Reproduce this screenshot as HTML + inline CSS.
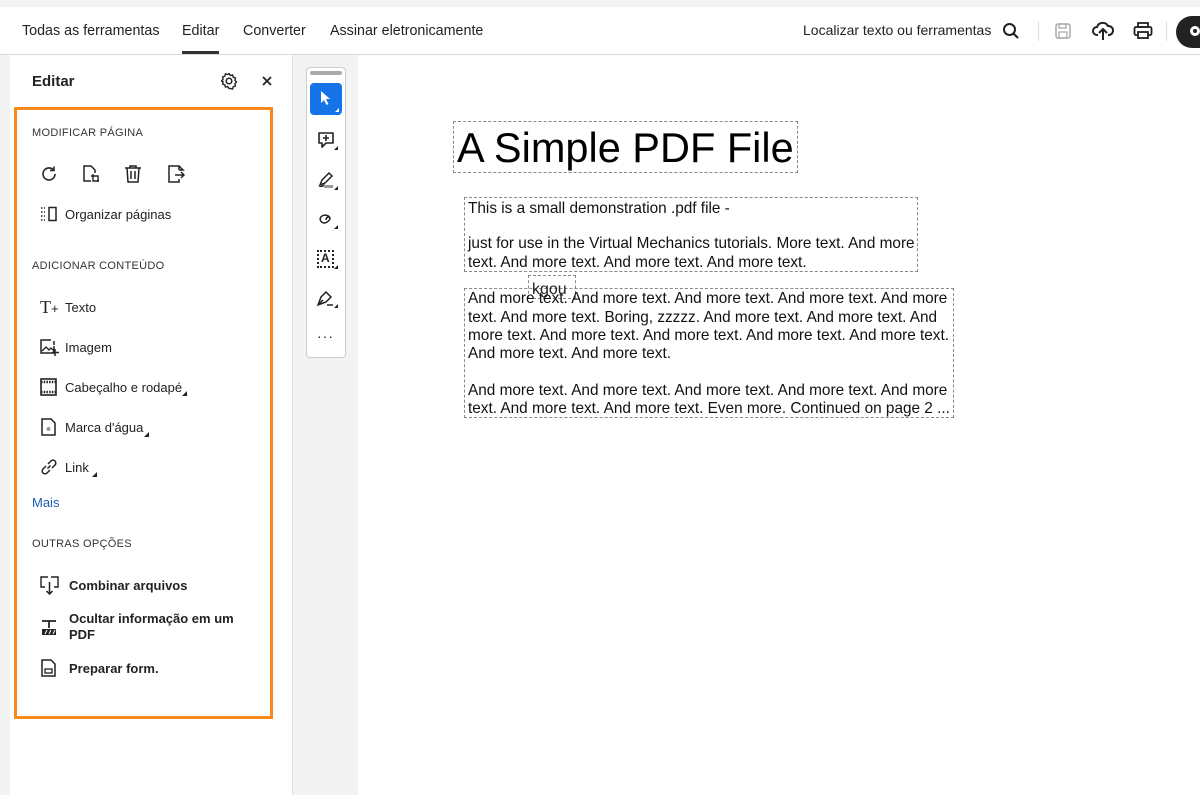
<!DOCTYPE html>
<html><head><meta charset="utf-8"><style>
*{margin:0;padding:0;box-sizing:border-box}
body{width:1200px;height:795px;overflow:hidden;background:#f3f3f3;font-family:"Liberation Sans",Arial,sans-serif;position:relative;color:#222}
.a{position:absolute;white-space:nowrap}
.hdr{position:absolute;left:0;top:7px;width:1200px;height:48px;background:#fff;border-bottom:1px solid #d8d8d8}
.nav{font-size:14.3px;color:#222;top:23px}
.panel{position:absolute;left:10px;top:55px;width:283px;height:740px;background:#fff;border-right:1px solid #e0e0e0}
.box{position:absolute;left:14px;top:107px;width:259px;height:612px;border:3px solid #f68a1e}
.sec{font-size:11px;color:#333;letter-spacing:.3px}
.it{font-size:13px;color:#222}
.b{font-weight:bold}
.tri{position:absolute;width:0;height:0;border-left:5px solid transparent;border-bottom:5px solid #222}
.page{position:absolute;left:358px;top:55px;width:842px;height:740px;background:#fff}
.pt{font-size:15.35px;color:#111}
.dot{position:absolute;border:1px dashed #888}
svg{position:absolute}
</style></head><body>
<div class="hdr"></div>
<div class="a nav" style="left:22px">Todas as ferramentas</div>
<div class="a nav" style="left:182px">Editar</div>
<div style="position:absolute;left:182px;top:51px;width:37px;height:3px;background:#333"></div>
<div class="a nav" style="left:243px">Converter</div>
<div class="a nav" style="left:330px">Assinar eletronicamente</div>
<div class="a nav" style="left:803px;font-size:14px;top:22px">Localizar texto ou ferramentas</div>
<svg style="left:1002px;top:22px" width="18" height="18" viewBox="0 0 18 18"><circle cx="7.5" cy="7.5" r="5.5" fill="none" stroke="#222" stroke-width="2"/><path d="M11.5 11.5L16 16" stroke="#222" stroke-width="2.2"/></svg>
<div style="position:absolute;left:1038px;top:21px;width:1px;height:20px;background:#ddd"></div>
<svg style="left:1054px;top:22px" width="18" height="18" viewBox="0 0 18 18"><rect x="2" y="2" width="14" height="14" rx="2" fill="none" stroke="#aaa" stroke-width="1.5"/><rect x="5" y="2" width="7" height="4" fill="none" stroke="#aaa" stroke-width="1.3"/><rect x="5" y="10" width="8" height="6" fill="none" stroke="#aaa" stroke-width="1.3"/></svg>
<svg style="left:1092px;top:21px" width="22" height="20" viewBox="0 0 22 20"><path d="M6 14H5a4 4 0 0 1 0-8 6 6 0 0 1 11-1 4.5 4.5 0 0 1 1 9h-1" fill="none" stroke="#222" stroke-width="2"/><path d="M11 19V9M7 12l4-4 4 4" fill="none" stroke="#222" stroke-width="2"/></svg>
<svg style="left:1133px;top:22px" width="20" height="18" viewBox="0 0 20 18"><rect x="5" y="1" width="10" height="4" fill="none" stroke="#222" stroke-width="1.8"/><rect x="1.5" y="5" width="17" height="8" rx="1.5" fill="none" stroke="#222" stroke-width="1.8"/><rect x="5" y="10" width="10" height="6" fill="#fff" stroke="#222" stroke-width="1.8"/></svg>
<div style="position:absolute;left:1166px;top:21px;width:1px;height:20px;background:#ddd"></div>
<div style="position:absolute;left:1176px;top:16px;width:40px;height:32px;border-radius:16px;background:#222"></div>
<div style="position:absolute;left:1190px;top:26px;width:10px;height:10px;border-radius:50%;border:3px solid #fff"></div>

<div class="panel"></div>
<div class="a" style="left:32px;top:73px;font-size:15px;font-weight:bold">Editar</div>
<svg style="left:220px;top:72px" width="18" height="18" viewBox="0 0 18 18"><circle cx="9" cy="9" r="2.8" fill="none" stroke="#222" stroke-width="1.5"/><path d="M9 1.5l1.3 2 2.3-.6.6 2.3 2.3.8-.6 2.3 1.6 1.7-1.6 1.7.6 2.3-2.3.8-.6 2.3-2.3-.6L9 16.5l-1.3-2-2.3.6-.6-2.3-2.3-.8.6-2.3L1.5 9l1.6-1.7-.6-2.3 2.3-.8.6-2.3 2.3.6z" fill="none" stroke="#222" stroke-width="1.4" stroke-linejoin="round"/></svg>
<svg style="left:262px;top:76px" width="10" height="10" viewBox="0 0 10 10"><path d="M1 1l8 8M9 1L1 9" stroke="#222" stroke-width="1.8"/></svg>
<div class="box"></div>
<div class="a sec" style="left:32px;top:127px">MODIFICAR PÁGINA</div>
<svg style="left:40px;top:165px" width="18" height="18" viewBox="0 0 18 18"><path d="M15 9a6 6 0 1 1-2-4.5" fill="none" stroke="#222" stroke-width="1.6"/><path d="M14 1.5v4h-4" fill="none" stroke="#222" stroke-width="1.6"/></svg>
<svg style="left:82px;top:165px" width="18" height="18" viewBox="0 0 18 18"><path d="M9 16H2V1h7l4 4v3" fill="none" stroke="#222" stroke-width="1.5"/><path d="M11 9v7h6M9 11h7v6" fill="none" stroke="#222" stroke-width="1.4"/></svg>
<svg style="left:124px;top:165px" width="18" height="18" viewBox="0 0 18 18"><path d="M1 3h16M6 3V1h6v2M3 3l1 14h10l1-14M7 6v8M11 6v8" fill="none" stroke="#222" stroke-width="1.5"/></svg>
<svg style="left:167px;top:165px" width="18" height="18" viewBox="0 0 18 18"><path d="M12 5V1H2v16h10v-3M12 1l4 4h-4" fill="none" stroke="#222" stroke-width="1.5"/><path d="M8 10h9M14 7l3 3-3 3" fill="none" stroke="#222" stroke-width="1.4"/></svg>
<svg style="left:40px;top:206px" width="18" height="16" viewBox="0 0 18 16"><path d="M1 2h4M1 6h4M1 10h4M1 14h4" stroke="#222" stroke-width="1.4" stroke-dasharray="1.5 1.5"/><rect x="9" y="1.5" width="7" height="13" fill="none" stroke="#222" stroke-width="1.5"/></svg>
<div class="a it" style="left:65px;top:207px">Organizar páginas</div>

<div class="a sec" style="left:32px;top:260px">ADICIONAR CONTEÚDO</div>
<div class="a" style="left:40px;top:297px;font-family:'Liberation Serif',serif;font-size:18px">T<span style="font-size:13px;font-family:'Liberation Sans'">+</span></div>
<div class="a it" style="left:65px;top:300px">Texto</div>
<svg style="left:40px;top:339px" width="19" height="17" viewBox="0 0 19 17"><path d="M14 7v7H1V1h10" fill="none" stroke="#222" stroke-width="1.5"/><path d="M2 12l4-4 3 3 2-2 3 3" fill="none" stroke="#222" stroke-width="1.3"/><path d="M15 10v7M12 13.5h7M14 2v4" stroke="#222" stroke-width="1.5"/></svg>
<div class="a it" style="left:65px;top:340px">Imagem</div>
<svg style="left:40px;top:378px" width="17" height="18" viewBox="0 0 17 18"><rect x="1" y="1" width="15" height="16" fill="none" stroke="#222" stroke-width="1.6"/><path d="M1 4h15M1 14h15" stroke="#222" stroke-width="2.5" stroke-dasharray="1.5 1.2"/></svg>
<div class="a it" style="left:65px;top:380px">Cabeçalho e rodapé</div><div class="tri" style="left:182px;top:391px"></div>
<svg style="left:41px;top:418px" width="15" height="18" viewBox="0 0 15 18"><path d="M1 1h9l4 4v12H1z" fill="none" stroke="#222" stroke-width="1.5"/><circle cx="7.5" cy="11" r="2" fill="#999"/></svg>
<div class="a it" style="left:65px;top:420px">Marca d'água</div><div class="tri" style="left:144px;top:432px"></div>
<svg style="left:40px;top:458px" width="18" height="18" viewBox="0 0 18 18"><path d="M7.5 10.5l3-3M6 8l-3 3a2.5 2.5 0 0 0 4 4l3-3M12 10l3-3a2.5 2.5 0 0 0-4-4L8 6" fill="none" stroke="#222" stroke-width="1.5"/></svg>
<div class="a it" style="left:65px;top:460px">Link</div><div class="tri" style="left:92px;top:472px"></div>
<div class="a it" style="left:32px;top:495px;color:#1a5fb4">Mais</div>

<div class="a sec" style="left:32px;top:538px">OUTRAS OPÇÕES</div>
<svg style="left:40px;top:576px" width="19" height="19" viewBox="0 0 19 19"><path d="M8 1H1v10h4M11 1h7v10h-4" fill="none" stroke="#222" stroke-width="1.4"/><path d="M9.5 6v12M6.5 15l3 3 3-3" fill="none" stroke="#222" stroke-width="1.5"/></svg>
<div class="a it b" style="left:69px;top:578px">Combinar arquivos</div>
<svg style="left:41px;top:619px" width="16" height="17" viewBox="0 0 16 17"><path d="M1 2h14M8 2v7" stroke="#222" stroke-width="1.8"/><rect x="1" y="10" width="14" height="6" fill="#222"/><path d="M4 15l2-4M8 15l2-4M12 15l2-4" stroke="#fff" stroke-width="1"/></svg>
<div class="a it b" style="left:69px;top:611px;line-height:16px">Ocultar informação em um<br>PDF</div>
<svg style="left:41px;top:659px" width="15" height="18" viewBox="0 0 15 18"><path d="M1 1h9l4 4v12H1z" fill="none" stroke="#222" stroke-width="1.5"/><rect x="4" y="10" width="7" height="4" fill="none" stroke="#222" stroke-width="1.3"/></svg>
<div class="a it b" style="left:69px;top:661px">Preparar form.</div>

<div style="position:absolute;left:306px;top:67px;width:40px;height:291px;background:#fff;border:1px solid #ccc;border-radius:4px"></div>
<div style="position:absolute;left:310px;top:71px;width:32px;height:4px;background:#aaa;border-radius:2px"></div>
<div style="position:absolute;left:310px;top:83px;width:32px;height:32px;background:#1473e6;border-radius:4px"></div>
<svg style="left:319px;top:90px" width="14" height="16" viewBox="0 0 14 16"><path d="M2 1v12l3-3 2.5 5 2-1-2.5-5h4z" fill="#fff"/></svg>
<div class="tri" style="left:335px;top:108px;border-bottom-color:#fff;border-left-width:4px;border-bottom-width:4px"></div>
<svg style="left:317px;top:131px" width="18" height="18" viewBox="0 0 18 18"><path d="M2 2h14v10H9l-4 4v-4H2z" fill="none" stroke="#222" stroke-width="1.6" stroke-linejoin="round"/><path d="M9 4v6M6 7h6" stroke="#222" stroke-width="1.6"/></svg>
<div class="tri" style="left:334px;top:146px;border-left-width:4px;border-bottom-width:4px"></div>
<svg style="left:317px;top:171px" width="18" height="18" viewBox="0 0 18 18"><path d="M3 14l2-5 7-7 3 3-7 7z" fill="none" stroke="#222" stroke-width="1.5"/><path d="M1 16h5l2-3z" fill="#222"/><rect x="7" y="14" width="9" height="3" fill="#999"/></svg>
<div class="tri" style="left:334px;top:186px;border-left-width:4px;border-bottom-width:4px"></div>
<svg style="left:316px;top:212px" width="18" height="16" viewBox="0 0 18 16"><path d="M14 6a5 4 0 1 0-6 5c3 0 6-3 6-5-1-2-4-1-4 2" fill="none" stroke="#222" stroke-width="1.5"/></svg>
<div class="tri" style="left:334px;top:225px;border-left-width:4px;border-bottom-width:4px"></div>
<div style="position:absolute;left:317px;top:250px;width:17px;height:18px;border:2px dotted #222"></div>
<div class="a" style="left:321px;top:251px;font-size:12px;font-weight:bold">A</div>
<div class="tri" style="left:334px;top:265px;border-left-width:4px;border-bottom-width:4px"></div>
<svg style="left:316px;top:289px" width="18" height="18" viewBox="0 0 18 18"><path d="M2 16l3-8 5-5 5 5-5 5zM2 16l5-5" fill="none" stroke="#222" stroke-width="1.5"/><path d="M11 16h6" stroke="#222" stroke-width="1.5"/></svg>
<div class="tri" style="left:334px;top:304px;border-left-width:4px;border-bottom-width:4px"></div>
<div class="a" style="left:317px;top:328px;font-size:14px;letter-spacing:1px">···</div>

<div class="page"></div>
<div class="dot" style="left:453px;top:121px;width:345px;height:52px"></div>
<div class="a" style="left:457px;top:124px;font-size:41.5px;color:#000">A Simple PDF File</div>
<div class="dot" style="left:464px;top:197px;width:454px;height:75px"></div>
<div class="a pt" style="left:468px;top:200px">This is a small demonstration .pdf file -</div>
<div class="a pt" style="left:468px;top:235px">just for use in the Virtual Mechanics tutorials. More text. And more</div>
<div class="a pt" style="left:468px;top:254px">text. And more text. And more text. And more text.</div>
<div class="dot" style="left:464px;top:288px;width:490px;height:130px"></div>
<div class="dot" style="left:528px;top:275px;width:48px;height:24px"></div>
<div class="a" style="left:532px;top:281px;font-size:16px">kgou</div>
<div class="a pt" style="left:468px;top:290px">And more text. And more text. And more text. And more text. And more</div>
<div class="a pt" style="left:468px;top:309px">text. And more text. Boring, zzzzz. And more text. And more text. And</div>
<div class="a pt" style="left:468px;top:327px">more text. And more text. And more text. And more text. And more text.</div>
<div class="a pt" style="left:468px;top:345px">And more text. And more text.</div>
<div class="a pt" style="left:468px;top:382px">And more text. And more text. And more text. And more text. And more</div>
<div class="a pt" style="left:468px;top:400px">text. And more text. And more text. Even more. Continued on page 2 ...</div>
</body></html>
